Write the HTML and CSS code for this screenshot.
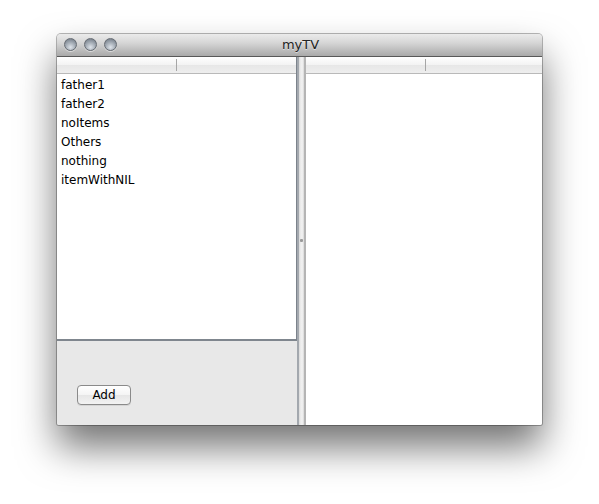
FILE: index.html
```html
<!DOCTYPE html>
<html>
<head>
<meta charset="utf-8">
<link rel="stylesheet" href="styles.css">
</head>
<body>
<div class="window">
  <div class="titlebar">
    <div class="lights">
      <span class="light"></span><span class="light"></span><span class="light"></span>
    </div>
    <div class="title">myTV</div>
  </div>
  <div class="content">
    <div class="left">
      <div class="table left-table">
        <div class="header"><div class="col c1"><span class="div"></span></div><div class="col"></div></div>
        <div class="rows">
          <div class="row">father1</div>
          <div class="row">father2</div>
          <div class="row">noItems</div>
          <div class="row">Others</div>
          <div class="row">nothing</div>
          <div class="row">itemWithNIL</div>
        </div>
      </div>
      <div class="bottom">
        <button class="btn">Add</button>
      </div>
    </div>
    <div class="splitter"><span class="dimple"></span></div>
    <div class="right">
      <div class="table right-table">
        <div class="header"><div class="col c1"><span class="div"></span></div><div class="col"></div></div>
      </div>
    </div>
  </div>
</div>
</body>
</html>
```

FILE: styles.css
```css
html, body { margin: 0; padding: 0; background: #fff; }
html { height: 100%; }
body { font-family: "DejaVu Sans", sans-serif; min-height: 504px; overflow: hidden; }

.window {
  margin: 34px 0 0 57px;
  width: 485px;
  height: 391px;
  border-radius: 4px 4px 2px 2px;
  background: #e8e8e8;
  box-shadow: 0 22px 38px rgba(0,0,0,0.55), 0 0 0 1px rgba(0,0,0,0.28);
  overflow: hidden;
  display: flex;
  flex-direction: column;
}

.titlebar {
  height: 22px;
  border-bottom: 1px solid #585858;
  background: linear-gradient(#ebebeb, #d6d6d6 40%, #a9a9a9);
  position: relative;
  flex: none;
}
.lights {
  position: absolute;
  left: 7px;
  top: 4px;
  display: flex;
  gap: 7px;
}
.light {
  width: 13px;
  height: 13px;
  border-radius: 50%;
  box-sizing: border-box;
  border: 1px solid #666c73;
  background: radial-gradient(circle at 50% 75%, #dfe4ea 0%, #a8b0b9 45%, #7f8892 80%);
  box-shadow: 0 1px 0 rgba(255,255,255,0.5);
}
.title {
  text-align: center;
  font-size: 13px;
  line-height: 22px;
  color: #222;
  text-shadow: 0 1px 0 rgba(255,255,255,0.5);
  padding-left: 2px;
}

.content {
  flex: 1;
  display: flex;
  min-height: 0;
}

.left {
  width: 240px;
  display: flex;
  flex-direction: column;
  flex: none;
}
.table {
  background: #fff;
  box-sizing: border-box;
}
.left-table {
  height: 284px;
  border-right: 1px solid #7c838c;
  border-bottom: 2px solid #7f868e;
}
.header {
  height: 16px;
  border-bottom: 1px solid #b9b9b9;
  background: linear-gradient(#ffffff, #f3f3f3 50%, #e7e7e7 51%, #eeeeee);
  display: flex;
}
.col { height: 100%; box-sizing: border-box; }
.c1 {
  width: 120px;
  display: flex;
  justify-content: flex-end;
  align-items: center;
}
.div { width: 1px; height: 12px; background: #a6a6a6; }
.col:last-child { flex: 1; }

.rows { padding-top: 2px; }
.row {
  height: 19px;
  line-height: 19px;
  font-size: 12px;
  color: #000;
  padding-left: 4px;
}

.bottom {
  flex: 1;
  background: #e8e8e8;
  padding: 43px 0 0 20px;
}
.btn {
  width: 54px;
  height: 20px;
  font-family: "DejaVu Sans", sans-serif;
  font-size: 12px;
  color: #000;
  border: 1px solid #8a8a8a;
  border-radius: 4px;
  background: linear-gradient(#ffffff, #f4f4f4 50%, #e6e6e6 51%, #f3f3f3);
  box-shadow: 0 1px 0 rgba(0,0,0,0.08);
  padding: 0;
  line-height: 18px;
}

.splitter {
  width: 9px;
  flex: none;
  box-sizing: border-box;
  border-left: 2px solid #a3a8ae;
  border-right: 2px solid #b5b5b5;
  background: linear-gradient(90deg, #d9d9d9, #f0f0f0 40%, #eeeeee 70%, #d8d8d8);
  position: relative;
}
.dimple {
  position: absolute;
  left: 1px;
  top: 182px;
  width: 3px;
  height: 3px;
  background: #9a9a9a;
  border-radius: 1px;
}

.right {
  flex: 1;
  display: flex;
  flex-direction: column;
}
.right-table {
  flex: 1;
}
```
